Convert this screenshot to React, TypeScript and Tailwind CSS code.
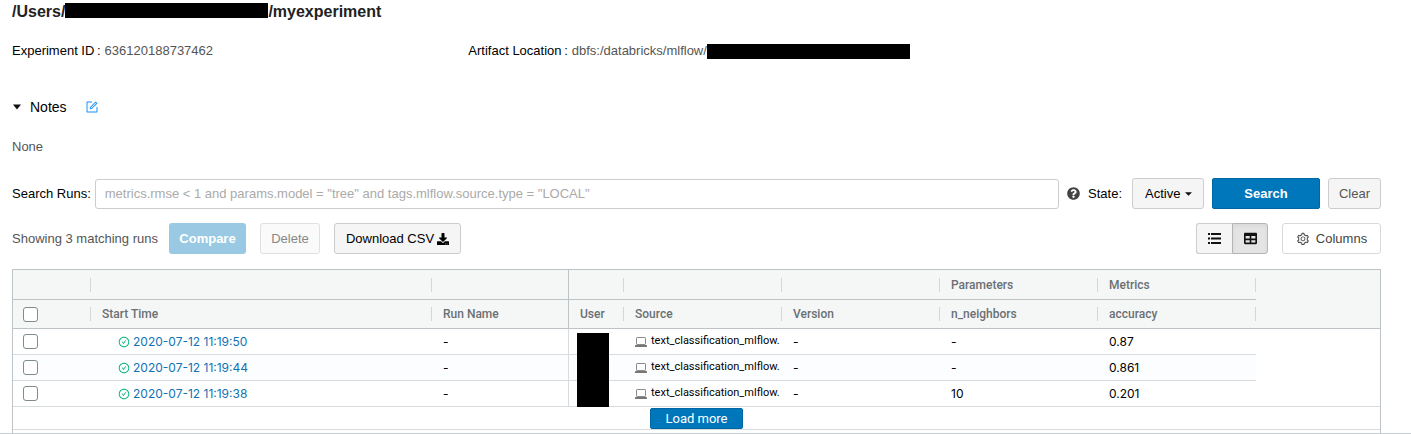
import React from "react";
import { FaQuestionCircle, FaDownload, FaTable } from "react-icons/fa";
import { AiOutlineCheckCircle, AiOutlineSetting, AiOutlineForm } from "react-icons/ai";

const columns = ["Start Time", "Run Name", "User", "Source", "Version", "n_neighbors", "accuracy"];
const groups = ["", "", "", "", "", "Parameters", "Metrics"];

const runs = [
  { start: "2020-07-12 11:19:50", neighbors: "-", accuracy: "0.87" },
  { start: "2020-07-12 11:19:44", neighbors: "-", accuracy: "0.861" },
  { start: "2020-07-12 11:19:38", neighbors: "10", accuracy: "0.201" },
];

function LaptopIcon() {
  return (
    <svg viewBox="0 0 12 10" className="h-2.5 w-3 shrink-0">
      <rect x="1.5" y="0.5" width="9" height="7" rx="0.6" fill="none" stroke="#8a8a8a" />
      <rect x="0" y="8" width="12" height="2" rx="0.6" fill="#777" />
    </svg>
  );
}

function ListIcon() {
  return (
    <svg viewBox="0 0 13 11" className="h-[11px] w-[13px]" fill="currentColor">
      <rect x="0" y="0" width="2" height="2" />
      <rect x="3" y="0" width="10" height="2" />
      <rect x="0" y="4.5" width="2" height="2" />
      <rect x="3" y="4.5" width="10" height="2" />
      <rect x="0" y="9" width="2" height="2" />
      <rect x="3" y="9" width="10" height="2" />
    </svg>
  );
}

function HeaderCell({ children, pinnedEdge = false, className }: { children?: React.ReactNode; pinnedEdge?: boolean; className: string }) {
  return (
    <th className={`border-b border-[#bdc3c7] p-0 font-medium ${pinnedEdge ? "border-r" : ""} ${className}`}>
      <div className="flex items-center justify-between">
        <span className="pl-[11px]">{children}</span>
        {!pinnedEdge && <span className="h-3.5 w-px bg-[#d3d7d9]" />}
      </div>
    </th>
  );
}

function SelectBox({ label }: { label: string }) {
  return (
    <input
      type="checkbox"
      aria-label={label}
      className="-ml-px block size-[15px] appearance-none rounded-[3px] border border-[#7f8c8d] bg-white checked:bg-[#0077bb]"
    />
  );
}

function RunsTable() {
  return (
    <div className="border border-b-0 border-[#bdc3c7] font-['Inter','Noto_Sans',sans-serif] text-xs">
      <table className="w-full table-fixed border-separate border-spacing-0 text-left">
        <colgroup>
          <col className="w-[78px]" />
          <col className="w-[341px]" />
          <col className="w-[137px]" />
          <col className="w-[55px]" />
          <col className="w-[158px]" />
          <col className="w-[158px]" />
          <col className="w-[158px]" />
          <col className="w-[158px]" />
          <col />
        </colgroup>
        <thead className="bg-[#f5f7f7] font-['Roboto',sans-serif] text-[#6b7073]">
          <tr>
            <HeaderCell className="h-[30px]" />
            {groups.map((group, i) => (
              <HeaderCell key={i} pinnedEdge={i === 1} className="h-[30px]">{group}</HeaderCell>
            ))}
            <td rowSpan={2} className="border-b border-[#bdc3c7]" />
          </tr>
          <tr>
            <HeaderCell className="h-[29px]">
              <SelectBox label="Select all runs" />
            </HeaderCell>
            {columns.map((column, i) => (
              <HeaderCell key={column} pinnedEdge={i === 1} className="h-[29px]">{column}</HeaderCell>
            ))}
          </tr>
        </thead>
        <tbody className="text-black [&_td]:h-[26px] [&_td]:border-b [&_td]:border-[#d9dcde] [&_td]:py-0 [&_td]:pr-0 [&_td]:pl-[11px]">
          {runs.map((run, i) => (
            <tr key={run.start} className={i === 1 ? "bg-[#fcfdfe]" : "bg-white"}>
              <td><SelectBox label={`Select run ${run.start}`} /></td>
              <td>
                <a href="#run" className="ml-4 flex items-center gap-[3px] text-[#1072b4]">
                  <AiOutlineCheckCircle className="size-3 text-[#00b379]" />
                  {run.start}
                </a>
              </td>
              <td className="border-r">-</td>
              <td className="relative">
                {i === 0 && <div className="absolute top-1 left-2 z-10 h-[74px] w-8 bg-black" />}
              </td>
              <td>
                <div className="flex items-center gap-1 font-['Roboto',sans-serif] text-[11px] whitespace-nowrap">
                  <LaptopIcon />
                  text_classification_mlflow.
                </div>
              </td>
              <td>-</td>
              <td>{run.neighbors}</td>
              <td>{run.accuracy}</td>
              <td className={i === 2 ? "" : "border-b-white! bg-white"} />
            </tr>
          ))}
        </tbody>
      </table>
      <div className="flex h-[23px] items-center justify-center border-b border-[#d9dcde]">
        <button className="h-[21px] w-[93px] rounded-[2px] border border-[#0067a5] bg-[#0077bb] font-['Roboto',sans-serif] text-[13px] leading-none text-white">Load more</button>
      </div>
      <div className="h-[3px]" />
    </div>
  );
}

export default function App() {
  return (
    <main className="border-b border-[#c8cccf] bg-white pr-[30px] pl-3 font-['Liberation_Sans',Arial,sans-serif] text-[13px] text-[#555]">
      <h1 className="flex h-6 items-center text-base font-bold text-[#222]">
        /Users/<span className="mb-[3px] h-[15px] w-[203px] bg-black" />/myexperiment
      </h1>
      <div className="mt-[15px] grid h-6 grid-cols-3 items-center">
        <div className="flex gap-1"><span className="text-black">Experiment ID&thinsp;:</span><span>636120188737462</span></div>
        <div className="flex items-center whitespace-nowrap">
          <div className="flex gap-1"><span className="text-black">Artifact Location&thinsp;:</span><span>dbfs:/databricks/mlflow/</span></div>
          <span className="h-[15px] w-[203px] shrink-0 bg-black" />
        </div>
      </div>
      <section className="mt-8">
        <div className="flex h-6 items-center">
          <button className="flex items-center gap-2 text-sm text-black">
            <svg viewBox="0 0 10 6" className="h-[6px] w-2.5" fill="#111"><path d="M1 0.5h8L5 5.5z" /></svg>
            Notes
          </button>
          <button aria-label="Edit notes" className="ml-[18px] text-[#1890ff]"><AiOutlineForm className="size-3.5" /></button>
        </div>
        <p className="mt-[18px] leading-5">None</p>
      </section>
      <form className="mt-[21px] flex h-[31px] items-center gap-2" onSubmit={(e) => e.preventDefault()}>
        <label htmlFor="search" className="-mr-1 whitespace-nowrap text-black">Search Runs:</label>
        <input id="search" placeholder={'metrics.rmse < 1 and params.model = "tree" and tags.mlflow.source.type = "LOCAL"'}
          className="h-[30px] min-w-0 flex-1 rounded-[3px] border border-[#ccc] px-[9px] text-[13px] placeholder:text-[#aaa]" />
        <button type="button" aria-label="Search help" className="text-[#444]"><FaQuestionCircle className="size-[13px]" /></button>
        <label htmlFor="state" className="text-black">State:</label>
        <div className="relative ml-0.5">
          <select id="state" className="block h-[31px] w-[72px] appearance-none rounded-[3px] border border-[#ccc] bg-[#f5f5f5] pl-3 text-[13px] text-black">
            <option>Active</option>
            <option>Deleted</option>
          </select>
          <svg viewBox="0 0 8 4" className="pointer-events-none absolute top-3.5 right-3 h-1 w-[7px]" fill="#111"><path d="M0 0h8L4 4z" /></svg>
        </div>
        <button className="h-[31px] w-[108px] rounded-[2px] border border-[#0067a5] bg-[#0077bb] font-bold text-white">Search</button>
        <button type="button" className="h-[31px] w-[53px] rounded-[3px] border border-[#ccc] bg-[#f5f5f5]">Clear</button>
      </form>
      <div className="mt-3.5 flex h-[31px] items-center gap-3.5">
        <span className="-mr-[3px]">Showing 3 matching runs</span>
        <button disabled className="h-[31px] w-[77px] rounded-[3px] bg-[#99c9e3] font-bold text-white">Compare</button>
        <button disabled className="h-[31px] w-[60px] rounded-[3px] border border-[#e0e0e0] bg-[#fafafa] text-[#888]">Delete</button>
        <button className="flex h-[31px] w-[127px] items-center justify-center gap-[3px] rounded-[3px] border border-[#ccc] bg-[#f5f5f5] whitespace-nowrap text-black">
          Download CSV <FaDownload className="size-3" />
        </button>
        <div className="ml-auto flex text-[#111]">
          <button aria-label="List view" className="flex h-[31px] w-9 items-center justify-center rounded-l-[3px] border border-r-0 border-[#ccc] bg-[#f5f5f5]"><ListIcon /></button>
          <button aria-label="Table view" aria-pressed="true" className="flex h-[31px] w-9 items-center justify-center rounded-r-[3px] border border-[#b5b5b5] bg-[#e4e4e4] inset-shadow-sm"><FaTable className="size-[13px]" /></button>
        </div>
        <button className="flex h-[31px] w-[99px] items-center justify-center gap-1.5 rounded-[3px] border border-[#d9d9d9] bg-white text-[#444]">
          <AiOutlineSetting className="size-3.5" /> Columns
        </button>
      </div>
      <div className="mt-[15px]">
        <RunsTable />
      </div>
    </main>
  );
}
